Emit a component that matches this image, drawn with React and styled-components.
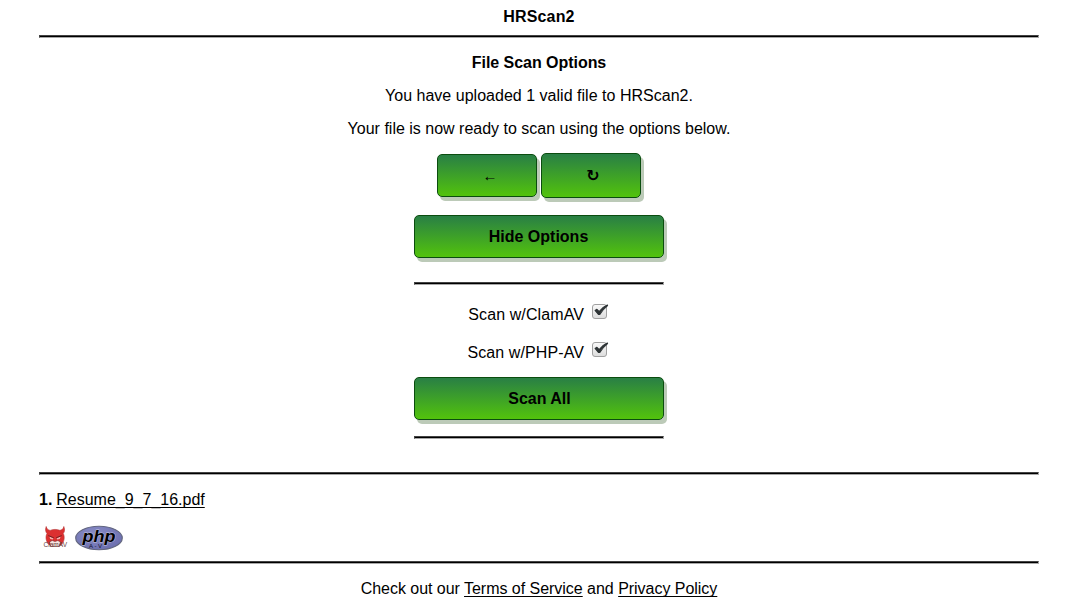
import React from "react";
import styled, { createGlobalStyle } from "styled-components";

const GlobalStyle = createGlobalStyle`
  *, *::before, *::after { box-sizing: border-box; }
  body {
    margin: 0;
    background: #fff;
    color: #000;
    font: 16px/18px "Liberation Sans", Arial, sans-serif;
    overflow: hidden;
  }
`;

const Page = styled.main`
  width: 1000px;
  margin-left: 39px;
  padding-top: 8px;
  display: flex;
  flex-direction: column;
`;

const Rule = styled.hr`
  width: ${(p) => p.$width || "100%"};
  height: 3px;
  margin: ${(p) => p.$margin};
  background: #000;
  border: 1px solid;
  border-color: #424242 #a8a8a8 #a8a8a8 #424242;
`;

const Heading = styled.h1`
  margin: 0;
  font-size: 16px;
  font-weight: bold;
  line-height: 18px;
  text-align: center;
  letter-spacing: ${(p) => p.$spacing || 0}px;
`;

const Options = styled.section`
  display: flex;
  flex-direction: column;
  align-items: center;
`;

const Text = styled.p`
  margin: 15px 0 0;
  letter-spacing: ${(p) => p.$spacing || 0}px;
`;

const ButtonRow = styled.div`
  display: flex;
  align-items: center;
  gap: 4px;
  margin-top: 15px;
`;

const Button = styled.button`
  width: ${(p) => p.$width || 250}px;
  height: ${(p) => p.$height || 43}px;
  margin: ${(p) => p.$margin || 0};
  padding: ${(p) => p.$padding || 0};
  border: 1px solid #0b4d0f;
  border-radius: 5px;
  background: linear-gradient(to bottom, #297f45, #52c30c);
  box-shadow: 3px 4px 0 #bccab8;
  color: #000;
  font: bold ${(p) => p.$fontSize || 16}px/18px "Liberation Sans", "DejaVu Sans", sans-serif;
  text-align: center;
`;

const CheckRow = styled.label`
  display: flex;
  align-items: flex-start;
  justify-content: flex-end;
  width: 150px;
  padding-right: 5px;
  margin-top: ${(p) => p.$top}px;
  height: 18px;
  letter-spacing: 0.1px;
  white-space: nowrap;
`;

const CheckSvg = styled.svg`
  display: block;
  flex: none;
  margin: -3px 0 0 8px;
`;

const FileRow = styled.div`
  margin-top: 16px;
`;

const FileNumber = styled.b`
  margin-right: -0.6px;
`;

const Link = styled.a`
  color: #000;
  text-decoration: underline;
  text-decoration-thickness: 1px;
  text-decoration-skip-ink: none;
  text-underline-offset: 2px;
`;

const Logos = styled.div`
  display: flex;
  align-items: flex-start;
  height: 28px;
  margin: 16px 0 0 4px;
  gap: 7px;
`;

const Footer = styled.footer`
  margin-top: 16px;
  text-align: center;
  letter-spacing: -0.03px;
`;

const Logo = styled.svg`
  display: block;
`;

function Check() {
  return (
    <CheckSvg width="17" height="17" viewBox="0 0 17 17">
      <defs>
        <linearGradient id="box" x1="0" y1="0" x2="0" y2="1">
          <stop offset="0" stopColor="#fafafa" />
          <stop offset="1" stopColor="#dcdcdc" />
        </linearGradient>
      </defs>
      <rect x="0.5" y="1.5" width="14" height="14" rx="2.5" fill="url(#box)" stroke="#a0a0a0" />
      <path d="M3.1 7.4 4.9 6.3 7.2 8.6C9.4 5.6 12 3.2 15.3 1.9L15.6 2.6C12.3 5.2 9.9 7.8 7.8 11.4L6.4 11.4Z" fill="#2e3436" stroke="#2e3436" strokeWidth="1.1" strokeLinejoin="round" />
    </CheckSvg>
  );
}

function ClamLogo() {
  return (
    <Logo width="25" height="24" viewBox="0 0 25 24">
      <path d="M3.2 1.5C2 4.5 2.6 7 4 8.5 2.2 11.5 2.8 17 6.4 20H18C21.4 17 22 11.5 20.2 8.5 21.7 6.8 22 4.5 20.8 1.5 20.4 4.2 18.5 5.2 16.8 5.3 14 4.1 10 4.1 7.2 5.4 5.2 5.1 3.6 3.9 3.2 1.5Z" fill="#dc3030" stroke="#b33030" strokeWidth="0.6" />
      <path d="M6.3 11.5 10.3 13.3 9.9 14.6 7.3 14ZM17.7 11.5 13.7 13.3 14.1 14.6 16.7 14Z" fill="#f5b5b0" />
      <path d="M5.3 10.6 10.8 12.8M18.7 10.6 13.2 12.8" stroke="#641f1f" strokeWidth="0.9" />
      <path d="M6.5 16.9 9.2 15.5 12 16.5 14.8 15.5 17.5 16.9 16.2 21.5H7.8Z" fill="#f7e6e3" stroke="#702828" strokeWidth="0.6" />
      <text x="0.5" y="21.8" textLength="23.5" lengthAdjust="spacingAndGlyphs" fontFamily="Liberation Sans, sans-serif" fontSize="7" fill="#6a4040">ClamAV</text>
    </Logo>
  );
}

function PhpLogo() {
  return (
    <Logo width="48" height="27" viewBox="0 -0.5 48 27">
      <defs>
        <radialGradient id="php" cx="0.4" cy="0.35" r="0.65">
          <stop offset="0" stopColor="#8b8fc8" />
          <stop offset="1" stopColor="#6d70b0" />
        </radialGradient>
      </defs>
      <ellipse cx="24" cy="12.5" rx="23.3" ry="11.8" fill="url(#php)" stroke="#62667f" strokeWidth="1.1" />
      <text x="7.6" y="16.3" textLength="33" lengthAdjust="spacingAndGlyphs" fontFamily="Liberation Sans, sans-serif" fontWeight="bold" fontStyle="italic" fontSize="17" fill="#000" stroke="#c8c8e0" strokeWidth="0.8" paintOrder="stroke">php</text>
      <text x="14" y="22" textLength="13" fontFamily="Liberation Sans, sans-serif" fontSize="6" fill="#10102a">A-V</text>
    </Logo>
  );
}

export default function App() {
  return (
    <>
      <GlobalStyle />
      <Page>
        <Heading $spacing={0.15}>HRScan2</Heading>
        <Rule $margin="9px 0 16px" />
        <Options>
          <Heading as="h2" $spacing={-0.04}>File Scan Options</Heading>
          <Text $spacing={0.02}>You have uploaded 1 valid file to HRScan2.</Text>
          <Text>Your file is now ready to scan using the options below.</Text>
          <ButtonRow>
            <Button $width={100} $fontSize={15} $padding="0 0 0 6px">←</Button>
            <Button $width={100} $height={45} $padding="0 0 0 4px">↻</Button>
          </ButtonRow>
          <Button $margin="17px 0 0" $padding="0 1px 0 0">Hide Options</Button>
          <Rule $width="250px" $margin="24px 0 0" />
          <CheckRow $top={21}>Scan w/ClamAV<Check /></CheckRow>
          <CheckRow $top={20}>Scan w/PHP-AV<Check /></CheckRow>
          <Button $margin="15px 0 0" $padding="0 0 0 1px">Scan All</Button>
          <Rule $width="250px" $margin="16px 0 0" />
        </Options>
        <Rule $margin="33px 0 0" />
        <FileRow>
          <FileNumber>1.</FileNumber> <Link>Resume_9_7_16.pdf</Link>
        </FileRow>
        <Logos>
          <ClamLogo />
          <PhpLogo />
        </Logos>
        <Rule $margin="8px 0 0" />
        <Footer>
          Check out our <Link>Terms of Service</Link> and <Link>Privacy Policy</Link>
        </Footer>
      </Page>
    </>
  );
}
